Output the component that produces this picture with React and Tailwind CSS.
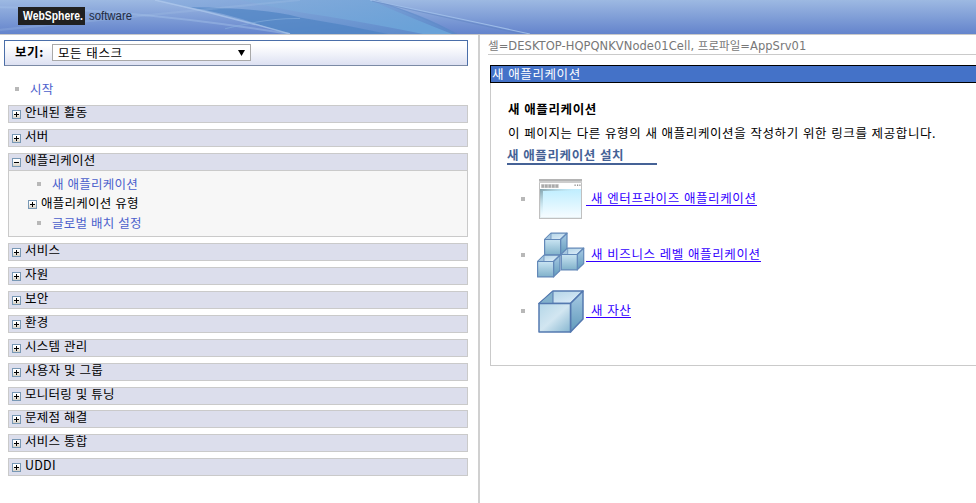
import React from "react";

const KR_BASE = "font-['Noto_Sans_CJK_KR',sans-serif] text-[12.5px] [word-spacing:0.7px] whitespace-pre";
const NAV = `${KR_BASE} tracking-[0.25px]`;
const KR = `${KR_BASE} tracking-[0.6px]`;

function Toggle({ open = false }) {
  return (
    <svg className="block h-[9px] w-[9px] shrink-0" viewBox="0 0 9 9" shapeRendering="crispEdges">
      <defs>
        <linearGradient id="tg" x1="0" y1="0" x2="0" y2="1">
          <stop offset="0.3" stopColor="#fff" />
          <stop offset="1" stopColor="#d3cdc0" />
        </linearGradient>
      </defs>
      <rect x="0.5" y="0.5" width="8" height="8" fill="url(#tg)" stroke="#7898b5" />
      <rect x="2" y="4" width="5" height="1" fill="#000" />
      {!open && <rect x="4" y="2" width="1" height="5" fill="#000" />}
    </svg>
  );
}

function Bullet() {
  return <span className="block h-1 w-1 shrink-0 bg-[#b8b8b8]" />;
}

function Bar({ label, open }) {
  return (
    <div className="flex h-[18px] items-start border border-[#cacaca] bg-[#dcdeec] pl-[3px]">
      <span className="flex pt-1"><Toggle open={open} /></span>
      <span className={`${NAV} -mt-[2px] ml-1 leading-4 text-black`}>{label}</span>
    </div>
  );
}

function Banner() {
  return (
    <svg className="absolute inset-0 h-full w-full" viewBox="0 0 976 33" preserveAspectRatio="none">
      <defs>
        <linearGradient id="sky" x1="0" y1="0" x2="0" y2="1">
          <stop offset="0" stopColor="#9db9e2" />
          <stop offset="1" stopColor="#6484cc" />
        </linearGradient>
        <linearGradient id="wing" x1="0" y1="0" x2="1" y2="1">
          <stop offset="0" stopColor="#8fb0df" />
          <stop offset="1" stopColor="#5a88c9" />
        </linearGradient>
        <linearGradient id="aqua" x1="0" y1="0" x2="1" y2="0.6">
          <stop offset="0" stopColor="#83acdb" stopOpacity="0.7" />
          <stop offset="1" stopColor="#6aa2d8" />
        </linearGradient>
      </defs>
      <rect width="976" height="33" fill="url(#sky)" />
      <path d="M155 0H370Q420 12 457 33H290Q215 13 155 0Z" fill="url(#wing)" />
      <path d="M190 7Q270 8 300 17Q345 24 388 33H284Q240 15 190 7Z" fill="#4b81c1" opacity="0.65" />
      <path d="M240 0H370Q400 13 452 33H423Q350 19 300 12Q270 6 240 0Z" fill="url(#aqua)" />
      <path d="M0 7Q130 8 290 33" fill="none" stroke="#a3c1e8" opacity="0.45" strokeWidth="2" />
      <path d="M155 0Q225 15 290 33" fill="none" stroke="#b3cdee" opacity="0.65" strokeWidth="1.5" />
      <path d="M0 29Q150 15 300 0" fill="none" stroke="#a9c4e9" opacity="0.25" strokeWidth="2" />
      <path d="M225 28Q270 17 300 18" fill="none" stroke="#88b0de" opacity="0.6" />
      <path d="M375 0Q425 17 457 33" fill="none" stroke="#6187c5" opacity="0.4" />
      <path d="M370 0Q460 18 530 33" fill="none" stroke="#9dbce7" strokeWidth="1" />
      <path d="M372 1Q460 20 522 33" fill="none" stroke="#5c80bd" strokeWidth="0.8" opacity="0.6" />
    </svg>
  );
}

function Defs() {
  return (
    <defs>
      <linearGradient id="front" x1="0" y1="0" x2="1" y2="1">
        <stop offset="0" stopColor="#b4d7e8" />
        <stop offset="0.5" stopColor="#d2e6f1" />
        <stop offset="1" stopColor="#86b6d0" />
      </linearGradient>
      <linearGradient id="small" x1="0" y1="0" x2="0" y2="1">
        <stop offset="0" stopColor="#c9e4f2" />
        <stop offset="1" stopColor="#80b1ca" />
      </linearGradient>
      <linearGradient id="side" x1="0" y1="0" x2="0" y2="1">
        <stop offset="0" stopColor="#a9cbe5" />
        <stop offset="1" stopColor="#609abb" />
      </linearGradient>
      <linearGradient id="inside" x1="0" y1="0" x2="1" y2="1">
        <stop offset="0" stopColor="#acd0e3" />
        <stop offset="1" stopColor="#e1effb" />
      </linearGradient>
    </defs>
  );
}

function WindowIcon() {
  return (
    <svg className="block h-[40px] w-[43px]" viewBox="0 0 43 40">
      <defs>
        <linearGradient id="pane" x1="0" y1="0" x2="0" y2="1">
          <stop offset="0" stopColor="#bfeeff" />
          <stop offset="1" stopColor="#f5fcff" />
        </linearGradient>
        <linearGradient id="shade" x1="0" y1="0" x2="0.5" y2="0.5">
          <stop offset="0" stopColor="#7f9ea8" />
          <stop offset="1" stopColor="#d5f3fd" stopOpacity="0" />
        </linearGradient>
      </defs>
      <rect width="43" height="40" fill="#c0c0c0" />
      <rect width="43" height="2" fill="#b4b4b4" />
      <rect y="2" width="43" height="2" fill="#cdcdcd" />
      <rect x="1" y="4" width="41" height="35" fill="#fff" />
      <rect x="1" y="10" width="41" height="29" fill="#e4eef1" />
      <rect x="2" y="10" width="40" height="28" fill="url(#pane)" />
      <path d="M1 10H42V12H4V39H1Z" fill="url(#shade)" />
      <rect x="2" y="5" width="18" height="4" fill="#ddd" />
      {[2.5, 6, 9.5, 13, 16.5].map((x) => <rect key={x} x={x} y="5.5" width="2.6" height="3.2" fill="#aaa" />)}
      {[35.5, 38, 40.3].map((x) => <rect key={x} x={x} y="5.5" width="1.2" height="1.4" fill="#888" />)}
    </svg>
  );
}

function SmallBox({ x, y }) {
  return (
    <g transform={`translate(${x} ${y})`} stroke="#6288b8" strokeWidth="1.2" strokeLinejoin="round">
      <path d="M0.6 7L7 0.7H23L16.5 7Z" fill="url(#inside)" />
      <path d="M0.6 7L7 0.7V7Z" fill="#a5c6df" strokeWidth="0.7" />
      <path d="M16.5 7L23 0.7V16L16.5 22.4Z" fill="url(#side)" />
      <rect x="0.6" y="7" width="16" height="15.4" fill="url(#small)" />
    </g>
  );
}

function BoxesIcon() {
  return (
    <svg className="block h-[46px] w-[48px]" viewBox="0 0 48 46">
      <Defs />
      <SmallBox x={7} y={0.5} />
      <SmallBox x={23.7} y={15.5} />
      <SmallBox x={0} y={22.5} />
    </svg>
  );
}

function BoxIcon() {
  return (
    <svg className="block h-[43px] w-[46px]" viewBox="0 0 46 43">
      <Defs />
      <g stroke="#5479b0" strokeWidth="1.5" strokeLinejoin="round">
        <path d="M1 13.5L15 1H45L32.5 13.5Z" fill="url(#inside)" />
        <path d="M1 13.5L15 1V13.5Z" fill="#82b1cc" strokeWidth="1" />
        <path d="M32.5 13.5L45 1V29L32.5 42Z" fill="url(#side)" />
        <rect x="1" y="13.5" width="31.5" height="28.5" fill="url(#front)" />
      </g>
    </svg>
  );
}

function LinkRow({ icon, label }) {
  return (
    <li className="flex h-14 items-center">
      <Bullet />
      <span className="mr-px ml-[11px] flex w-[49px] justify-center">{icon}</span>
      <a className={`${KR} relative -top-px border-b border-[#3300ff] leading-[15px] text-[#3300ff]`}>
        <span className="pl-[5px]">{label}</span>
      </a>
    </li>
  );
}

const before = ["안내된 활동", "서버"];
const after = ["서비스", "자원", "보안", "환경", "시스템 관리", "사용자 및 그룹", "모니터링 및 튜닝"];
const last = ["문제점 해결", "서비스 통합", "UDDI"];

export default function App() {
  return (
    <div className="flex h-[503px] w-[976px] flex-col overflow-hidden bg-white">
      <header className="relative h-[35px] shrink-0 border-b border-[#c9c9c9] bg-[#6484cc]">
        <Banner />
        <div className="relative flex pt-[7px] pl-[18px]">
          <span className="flex h-[18px] w-[67px] items-center bg-[#202020] pl-[5px]">
            <svg className="block h-[18px] w-[62px] overflow-visible" viewBox="0 0 62 18">
              <text x="0" y="13" textLength="60" lengthAdjust="spacingAndGlyphs" className="fill-white font-['Liberation_Sans',sans-serif] text-[12px] font-bold">WebSphere.</text>
            </svg>
          </span>
          <svg className="ml-1 block h-[18px] w-[46px] overflow-visible" viewBox="0 0 46 18">
            <text x="0" y="13" textLength="43" lengthAdjust="spacingAndGlyphs" className="fill-[#222b40] font-['Liberation_Sans',sans-serif] text-[12px]">software</text>
          </svg>
        </div>
      </header>

      <div className="flex min-h-0 flex-1">
        <nav className="w-[478px] shrink-0 pt-[5px]">
          <div className="ml-1 flex h-[26px] w-[464px] items-center border border-[#4a6ea9] border-b-[#7b8aa5] bg-linear-to-b from-white from-20% to-[#dde1f2] pl-[10px]">
            <span className={`${KR} -mt-[2px] w-[37px] shrink-0 leading-5 font-bold`}>보기:</span>
            <div className="-mt-px flex h-[17px] w-[199px] items-center justify-between border border-[#a9a9a9] bg-white pr-[5px] pl-[5px]">
              <span className={`${KR} leading-[14px]`}>모든 태스크</span>
              <svg className="block h-[6px] w-[7px]" viewBox="0 0 7 6"><path d="M0 0H7L3.5 6Z" fill="#000" /></svg>
            </div>
          </div>
          <div className="mt-[13px] flex h-[20px] items-center pl-[15px]">
            <Bullet />
            <span className={`${NAV} ml-[11px] leading-5 text-[#4b60cc]`}>시작</span>
          </div>
          <div className="mt-[6px] ml-2 flex w-[460px] flex-col gap-[6px]">
            {before.map((l) => <Bar key={l} label={l} />)}
            <div>
              <Bar label="애플리케이션" open />
              <div className="flex h-[66px] flex-col border border-t-0 border-[#cacaca] bg-[#f7f7f7] pt-[3px]">
                <div className="flex h-5 items-center pl-7"><Bullet /><span className={`${NAV} ml-[11px] leading-5 text-[#4b60cc]`}>새 애플리케이션</span></div>
                <div className="flex h-5 items-center pl-[19px]"><Toggle /><span className={`${NAV} -mt-[2px] ml-1 leading-5 text-black`}>애플리케이션 유형</span></div>
                <div className="-mt-px flex h-5 items-center pl-7"><Bullet /><span className={`${NAV} ml-[11px] leading-5 text-[#4b60cc]`}>글로벌 배치 설정</span></div>
              </div>
            </div>
            {after.map((l) => <Bar key={l} label={l} />)}
            <div className="-mt-px flex flex-col gap-[6px]">
              {last.map((l) => <Bar key={l} label={l} />)}
            </div>
          </div>
        </nav>

        <main className="min-w-0 flex-1 border-l-2 border-[#d0d0d0]">
          <div className="ml-2 flex h-[20px] items-center border-b border-[#cacaca] pt-[3px] font-['DejaVu_Sans','Noto_Sans_CJK_KR',sans-serif] text-[11.5px] leading-[16px] tracking-[0.05px] whitespace-pre text-[#777777]">
            셀=DESKTOP-HQPQNKVNode01Cell, 프로파일=AppSrv01
          </div>
          <section className="mt-[10px] ml-[10px] h-[301px] border-b border-l border-[#cacaca]">
            <h1 className={`${KR} -ml-px flex h-[18px] items-center border border-r-0 border-black bg-[#4472c8] pl-px leading-4 text-white`}>새 애플리케이션</h1>
            <div className="pt-[15px] pl-[17px]">
              <h2 className={`${KR} h-[23px] leading-[22px] font-bold`}>새 애플리케이션</h2>
              <p className={`${KR} h-[24px] leading-[24px]`}>이 페이지는 다른 유형의 새 애플리케이션을 작성하기 위한 링크를 제공합니다.</p>
              <h3 className={`${KR} -ml-px h-[20px] w-[150px] border-b-2 border-[#456296] leading-[19px] font-bold text-[#456296]`}>새 애플리케이션 설치</h3>
            </div>
            <ul className="pt-[6px] pl-[30px]">
              <LinkRow icon={<WindowIcon />} label="새 엔터프라이즈 애플리케이션" />
              <LinkRow icon={<BoxesIcon />} label="새 비즈니스 레벨 애플리케이션" />
              <LinkRow icon={<BoxIcon />} label="새 자산" />
            </ul>
          </section>
        </main>
      </div>
    </div>
  );
}
